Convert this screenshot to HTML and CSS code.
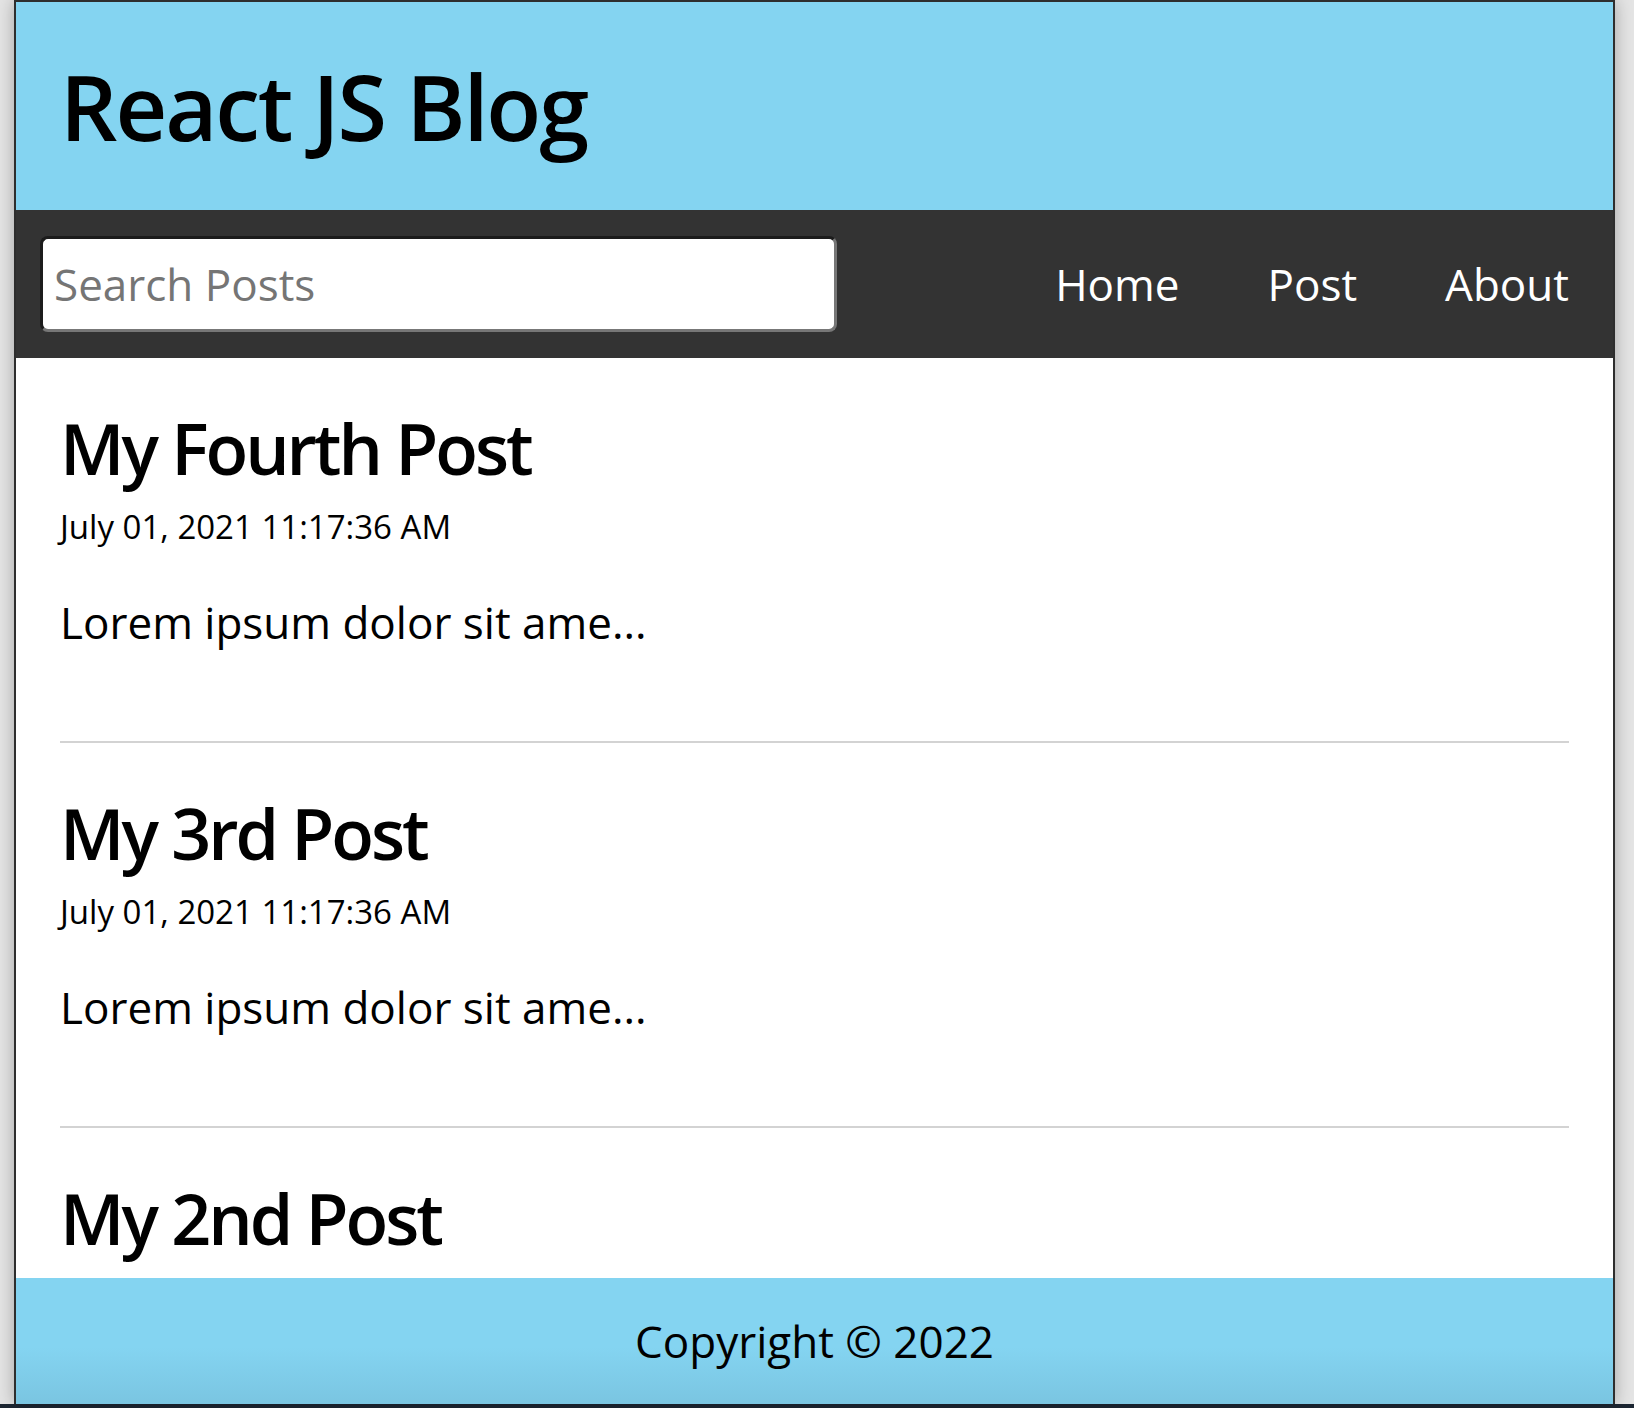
FILE: index.html
```html
<!DOCTYPE html>
<html lang="en">
<head>
<meta charset="utf-8">
<title>React JS Blog</title>
<link rel="stylesheet" href="styles.css">
</head>
<body>
<div class="app">
  <header class="header">
    <h1 class="title">React JS Blog</h1>
  </header>
  <nav class="nav">
    <form class="search-form">
      <input class="search" type="text" placeholder="Search Posts">
    </form>
    <ul class="links">
      <li><a href="#">Home</a></li>
      <li><a href="#">Post</a></li>
      <li><a href="#">About</a></li>
    </ul>
  </nav>
  <main class="main">
    <article class="post">
      <h2 class="post-title">My Fourth Post</h2>
      <p class="post-date">July 01, 2021 11:17:36 AM</p>
      <p class="post-body">Lorem ipsum dolor sit ame...</p>
    </article>
    <article class="post">
      <h2 class="post-title">My 3rd Post</h2>
      <p class="post-date">July 01, 2021 11:17:36 AM</p>
      <p class="post-body">Lorem ipsum dolor sit ame...</p>
    </article>
    <article class="post">
      <h2 class="post-title">My 2nd Post</h2>
      <p class="post-date">July 01, 2021 11:17:36 AM</p>
      <p class="post-body">Lorem ipsum dolor sit ame...</p>
    </article>
  </main>
  <footer class="footer">
    <p class="copyright">Copyright &copy; 2022</p>
  </footer>
</div>
</body>
</html>
```
FILE: styles.css
```css
* {
  box-sizing: border-box;
}

html {
  height: 1408px;
}

body {
  margin: 0;
  height: 1408px;
  overflow: hidden;
  font-family: "Open Sans", "Noto Sans", sans-serif;
  background: linear-gradient(to bottom, #e4e4e4 0, #e4e4e4 1404px, #1c2632 1404px, #1c2632 100%);
}

.app {
  margin-left: 14px;
  width: 1601px;
  height: 1404px;
  border: 2px solid #2e2e2e;
  border-bottom: 0;
  display: flex;
  flex-direction: column;
  background: #fff;
  box-shadow: 0 0 16px rgba(0, 0, 0, 0.28);
}

.header {
  flex: 0 0 208px;
  background: #84d4f1;
  display: flex;
  align-items: center;
  padding: 0 44px;
}

.title {
  margin: 0;
  font-size: 90px;
  font-weight: 600;
  letter-spacing: -2.1px;
  line-height: normal;
  color: #000;
}

.nav {
  flex: 0 0 148px;
  background: #333;
  display: flex;
  align-items: center;
  justify-content: space-between;
  padding: 0 44px 0 24px;
}

.search-form {
  margin: 0;
}

.search {
  width: 797px;
  height: 96px;
  border-style: solid;
  border-width: 3px;
  border-color: #1c1c1c #777 #777 #1c1c1c;
  border-radius: 8px;
  background: #fff;
  padding: 0 11px;
  font-family: "Open Sans", "Noto Sans", sans-serif;
  font-size: 44px;
  color: #000;
  outline: none;
}

.search::placeholder {
  color: #757575;
}

.links {
  list-style: none;
  margin: 0;
  padding: 0;
  display: flex;
  gap: 88px;
}

.links a {
  color: #fff;
  text-decoration: none;
  font-size: 44px;
  line-height: normal;
}

.main {
  flex: 1 1 auto;
  overflow: hidden;
  padding: 0 44px;
}

.post {
  padding: 42px 0 89px;
  border-bottom: 2px solid #d3d3d3;
}

.post-title {
  margin: 0;
  font-size: 70px;
  font-weight: 600;
  letter-spacing: -3px;
  line-height: normal;
  color: #000;
}

.post-date {
  margin: 8px 0 0;
  font-size: 33px;
  line-height: normal;
  color: #000;
}

.post-body {
  margin: 43px 0 0;
  font-size: 44px;
  line-height: normal;
  color: #000;
}

.footer {
  flex: 0 0 126px;
  display: flex;
  align-items: center;
  justify-content: center;
  background: linear-gradient(to bottom, #84d4f1 0, #84d4f1 55%, #7ac5e1 100%);
}

.copyright {
  margin: 0;
  font-size: 44px;
  line-height: normal;
  color: #000;
}
```
